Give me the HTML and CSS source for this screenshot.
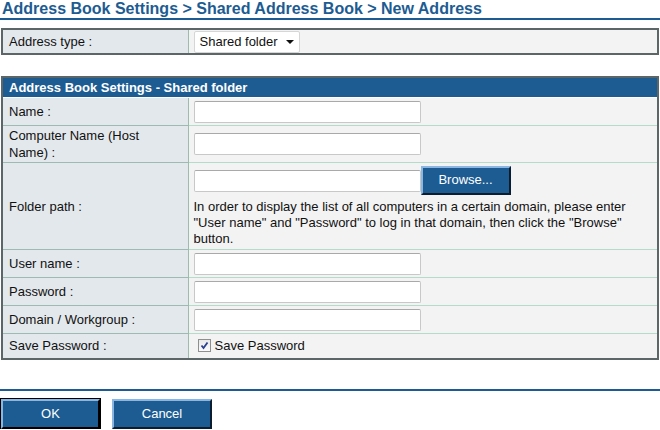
FILE: index.html
```html
<!DOCTYPE html>
<html>
<head>
<meta charset="utf-8">
<link rel="stylesheet" href="styles.css">
</head>
<body>
<h1 class="title">Address Book Settings &gt; Shared Address Book &gt; New Address</h1>

<table class="form type-table">
  <colgroup><col class="c-label"><col class="c-value"></colgroup>
  <tr class="row">
    <td class="label">Address type :</td>
    <td class="value">
      <div class="select"><span>Shared folder</span><span class="caret"></span></div>
    </td>
  </tr>
</table>

<table class="form main-table">
  <colgroup><col class="c-label"><col class="c-value"></colgroup>
  <tr><th colspan="2" class="head">Address Book Settings - Shared folder</th></tr>
  <tr class="row r-name">
    <td class="label">Name :</td>
    <td class="value"><div class="input"></div></td>
  </tr>
  <tr class="row r-comp">
    <td class="label">Computer Name (Host Name) :</td>
    <td class="value"><div class="input"></div></td>
  </tr>
  <tr class="row r-folder">
    <td class="label">Folder path :</td>
    <td class="value">
      <div class="folder-line"><div class="input"></div><div class="btn browse">Browse...</div></div>
      <p class="help">In order to display the list of all computers in a certain domain, please enter "User name" and "Password" to log in that domain, then click the "Browse" button.</p>
    </td>
  </tr>
  <tr class="row r-user">
    <td class="label">User name :</td>
    <td class="value"><div class="input"></div></td>
  </tr>
  <tr class="row r-pass">
    <td class="label">Password :</td>
    <td class="value"><div class="input"></div></td>
  </tr>
  <tr class="row r-dom">
    <td class="label">Domain / Workgroup :</td>
    <td class="value"><div class="input"></div></td>
  </tr>
  <tr class="row r-save">
    <td class="label">Save Password :</td>
    <td class="value"><label class="check"><span class="box"><svg width="11" height="11" viewBox="0 0 11 11"><path d="M2.5 5.5 L4.5 8 L8.5 2.5" fill="none" stroke="#2a3f8f" stroke-width="1.8"/></svg></span>Save Password</label></td>
  </tr>
</table>

<div class="footer-line"></div>
<div class="buttons">
  <div class="btn big focus">OK</div>
  <div class="btn big">Cancel</div>
</div>
</body>
</html>
```
FILE: styles.css
```css
html, body { margin: 0; padding: 0; background: #fff; }
body {
  font-family: "Liberation Sans", Arial, sans-serif;
  font-size: 13px;
  color: #111;
  width: 660px;
}
.title {
  margin: 0;
  padding: 0 0 1px 2px;
  font-size: 16px;
  line-height: 17px;
  font-weight: bold;
  color: #1d5c92;
  border-bottom: 2px solid #1d5c92;
}
.form {
  border-collapse: collapse;
  width: 658px;
  margin-left: 1px;
  border: 2px solid #5d6666;
  table-layout: fixed;
}
.c-label { width: 186px; }
.type-table { margin-top: 8px; }
.main-table { margin-top: 21px; }
.label {
  background: #e3e8ec;
  padding: 0 20px 0 6px;
  border-right: 1px solid #9dbbae;
  border-bottom: 1px solid #9dbbae;
  vertical-align: middle;
  line-height: 17px;
}
.value {
  background: #f3f3f3;
  padding: 0 18px 0 5px;
  border-bottom: 1px solid #b4dccb;
  vertical-align: middle;
}
.type-table .row { height: 25px; }
.type-table .label, .type-table .value { border-bottom: 0; }
.head {
  background: #1d5c92;
  color: #fff;
  font-weight: bold;
  font-size: 13px;
  text-align: left;
  padding: 0 0 0 6px;
  height: 19px;
  border-bottom: 1px solid #fff;
}
.r-name, .r-user, .r-pass, .r-dom { height: 28px; }
.r-comp { height: 37px; }
.r-folder { height: 86px; }
.r-save { height: 25px; }
.r-save .label, .r-save .value { border-bottom: 0; }
.input {
  width: 225px;
  height: 20px;
  background: #fff;
  border: 1px solid #c8c8c8;
  border-top-color: #a9a9a9;
  border-radius: 2px;
  box-sizing: content-box;
}
.select {
  display: inline-flex;
  align-items: center;
  height: 20px;
  padding: 0 5px 0 5px;
  background: #fff;
  border: 1px solid #d6d6d6;
  border-radius: 2px;
  font-size: 13px;
}
.caret {
  margin-left: 8px;
  width: 0; height: 0;
  border-left: 4px solid transparent;
  border-right: 4px solid transparent;
  border-top: 4px solid #111;
}
.folder-line { display: flex; align-items: center; margin-top: 3px; }
.btn {
  box-sizing: border-box;
  background: #1d5c92;
  color: #fff;
  text-align: center;
  border-top: 2px solid #8ab6e2;
  border-left: 2px solid #8ab6e2;
  border-right: 2px solid #0b1d2e;
  border-bottom: 2px solid #0b1d2e;
  font-size: 13px;
}
.browse {
  width: 90px;
  height: 29px;
  line-height: 24px;
}
.help {
  margin: 4px 0 2px;
  line-height: 16px;
  font-size: 13px;
}
.check { display: flex; align-items: center; margin-left: 4px; }
.box {
  display: inline-block;
  width: 11px; height: 11px;
  border: 1px solid #8f8f8f;
  background: linear-gradient(#e9e9e9, #fafafa);
  margin-right: 4px;
}
.box svg { display: block; }
.footer-line {
  margin-top: 29px;
  border-top: 2px solid #1d5c92;
}
.buttons {
  display: flex;
  gap: 12px;
  margin: 8px 0 0 1px;
}
.big {
  width: 100px;
  height: 30px;
  line-height: 26px;
}
.focus {
  outline: 1px solid #000;
  outline-offset: 0;
  width: 99px;
  border-right-color: #000;
  border-bottom-color: #000;
}
```
